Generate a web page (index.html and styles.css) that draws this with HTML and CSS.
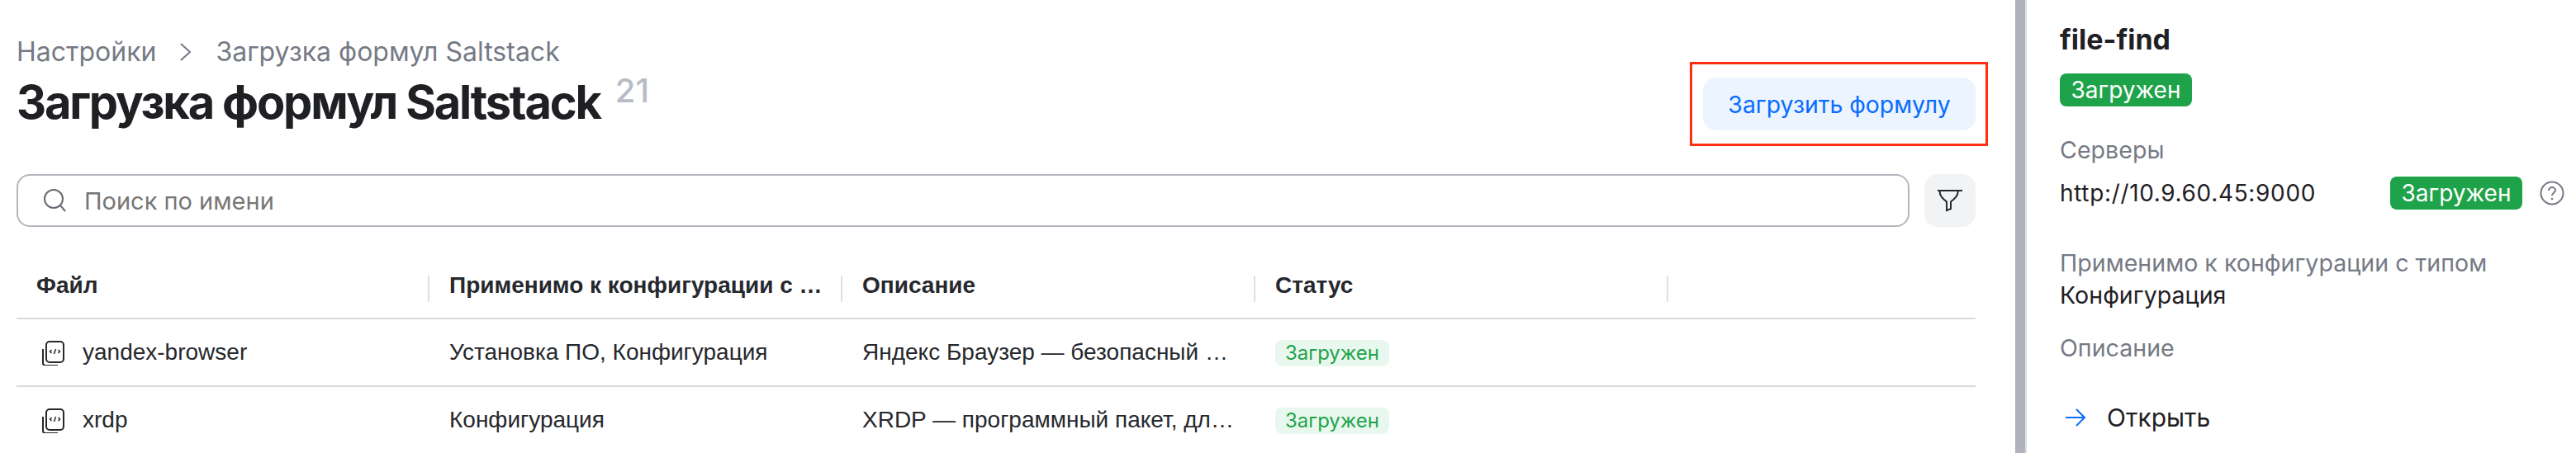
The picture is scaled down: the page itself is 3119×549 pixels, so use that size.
FILE: index.html
```html
<!DOCTYPE html>
<html lang="ru">
<head>
  <meta charset="UTF-8" />
  <title>Загрузка формул Saltstack</title>
  <link rel="stylesheet" href="styles.css">
</head>
<body>

  <main class="content">
    <div class="page-head">
      <div>
        <nav class="breadcrumbs">
          <span>Настройки</span>
          <svg class="crumb-sep" width="16" height="24" viewBox="0 0 16 24"><path d="M2 2l11 10L2 22" fill="none" stroke="#757a85" stroke-width="2"/></svg>
          <span>Загрузка формул Saltstack</span>
        </nav>
        <h1 class="page-title">Загрузка формул Saltstack<sup class="count">21</sup></h1>
      </div>
      <button class="upload-btn">Загрузить формулу</button>
    </div>

    <div class="toolbar">
      <div class="search">
        <svg width="30" height="30" viewBox="0 0 30 30"><circle cx="13" cy="13" r="11" fill="none" stroke="#666a72" stroke-width="2"/><path d="M21 21l6 7" fill="none" stroke="#666a72" stroke-width="2"/></svg>
        <span class="placeholder">Поиск по имени</span>
      </div>
      <button class="filter-btn">
        <svg width="32" height="32" viewBox="0 0 32 32"><path d="M1 4h30M3.500 4c0 7 4 10 8.500 13.500v10.500l5-2v-8.500c4.500-3.500 8.500-6.500 9-13.500" fill="none" stroke="#26282d" stroke-width="2"/></svg>
      </button>
    </div>

    <table class="formulas">
      <thead>
        <tr>
          <th>Файл</th>
          <th>Применимо к конфигурации с типом</th>
          <th>Описание</th>
          <th>Статус</th>
          <th class="spare"></th>
        </tr>
      </thead>
      <tbody>
        <tr>
          <td>
            <div class="file-cell">
              <svg width="32" height="32" viewBox="0 0 32 32"><rect x="6" y="3" width="21" height="25" rx="4" fill="none" stroke="#26282d" stroke-width="2"/><path d="M2 12v17c0 2 1 3 3 3h15" fill="none" stroke="#26282d" stroke-width="2"/><path d="M12.500 13l-2 2 2 2M20.500 13l2 2-2 2M17.500 12l-2 6" fill="none" stroke="#26282d" stroke-width="1.500"/></svg>
              yandex-browser
            </div>
          </td>
          <td>Установка ПО, Конфигурация</td>
          <td>Яндекс Браузер — безопасный браузер для работы</td>
          <td><span class="tag">Загружен</span></td>
          <td class="spare"></td>
        </tr>
        <tr>
          <td>
            <div class="file-cell">
              <svg width="32" height="32" viewBox="0 0 32 32"><rect x="6" y="3" width="21" height="25" rx="4" fill="none" stroke="#26282d" stroke-width="2"/><path d="M2 12v17c0 2 1 3 3 3h15" fill="none" stroke="#26282d" stroke-width="2"/><path d="M12.500 13l-2 2 2 2M20.500 13l2 2-2 2M17.500 12l-2 6" fill="none" stroke="#26282d" stroke-width="1.500"/></svg>
              xrdp
            </div>
          </td>
          <td>Конфигурация</td>
          <td>XRDP — программный пакет, для удаленного доступа</td>
          <td><span class="tag">Загружен</span></td>
          <td class="spare"></td>
        </tr>
      </tbody>
    </table>
  </main>

  <div class="divider"></div>

  <aside class="details">
    <h2 class="details-title">file-find</h2>
    <span class="badge">Загружен</span>

    <div class="label servers-label">Серверы</div>
    <div class="server-row">
      <span class="server-url">http://10.9.60.45:9000</span>
      <span class="badge">Загружен</span>
      <svg class="help" width="30" height="30" viewBox="0 0 30 30"><circle cx="15" cy="15" r="13.500" fill="none" stroke="#757a85" stroke-width="2"/><path d="M11 12c0-2.500 2-4 4-4s4 1.500 4 3.500c0 3-4 3.500-4 6.500" fill="none" stroke="#757a85" stroke-width="2"/><circle cx="15" cy="22" r="1.300" fill="#757a85"/></svg>
    </div>

    <div class="label type-label">Применимо к конфигурации с типом</div>
    <div class="value">Конфигурация</div>

    <div class="label descr-label">Описание</div>

    <a class="open-link">
      <svg width="24" height="22" viewBox="0 0 24 22"><path d="M0 11h23M13 1l10 10-10 10" fill="none" stroke="#0a6cff" stroke-width="2"/></svg>
      Открыть
    </a>
  </aside>

</body>
</html>
```

FILE: styles.css
```css
* {
  margin: 0;
  padding: 0;
  box-sizing: border-box;
}

html, body {
  height: 549px;
  overflow: hidden;
}

body {
  display: flex;
  background: #fff;
  color: #1f2024;
  font-family: Inter, 'Liberation Sans', sans-serif;
}

.content {
  width: 2440px;
  flex-shrink: 0;
  padding: 46px 48px 0 20px;
}

.page-head {
  display: flex;
  justify-content: space-between;
  align-items: flex-start;
  height: 165px;
}

.breadcrumbs {
  display: flex;
  align-items: center;
  gap: 28px;
  font-size: 32px;
  line-height: 34px;
  color: #757a85;
}

.page-title {
  font-size: 56px;
  line-height: 64px;
  font-weight: 700;
  letter-spacing: -2.200px;
  margin-top: 12px;
}

.count {
  font-size: 40px;
  font-weight: 500;
  color: #b8bcc5;
  letter-spacing: 0;
  margin-left: 18px;
  line-height: 0;
  vertical-align: 20px;
}

.upload-btn {
  position: relative;
  width: 330px;
  height: 64px;
  margin-top: 48px;
  border: none;
  border-radius: 16px;
  background: #ebf4ff;
  color: #0a6cff;
  font-family: inherit;
  font-size: 28.400px;
}

/* red annotation frame */
.upload-btn::after {
  content: "";
  position: absolute;
  top: -19px;
  bottom: -19px;
  left: -16px;
  right: -15px;
  border: 3px solid #ff2f0f;
}

.toolbar {
  display: flex;
  gap: 18px;
}

.search {
  flex-grow: 1;
  display: flex;
  align-items: center;
  gap: 20px;
  height: 64px;
  padding-left: 30px;
  border: 2px solid #b3b7bd;
  border-radius: 16px;
}

.placeholder {
  font-size: 29px;
  color: #777;
}

.filter-btn {
  width: 62px;
  height: 64px;
  border: none;
  border-radius: 16px;
  background: #f2f3f5;
  display: flex;
  align-items: center;
  justify-content: center;
}

.formulas {
  width: 100%;
  margin-top: 31px;
  border-collapse: collapse;
  table-layout: fixed;
  font-family: 'Liberation Sans', sans-serif;
  font-size: 28px;
  color: #26282d;
}

.formulas th,
.formulas td {
  width: 500px;
  padding: 0 24px;
  text-align: left;
  white-space: nowrap;
  overflow: hidden;
  text-overflow: ellipsis;
  border-bottom: 2px solid #d9d9d9;
}

.formulas th {
  height: 80px;
  font-weight: 700;
  background: linear-gradient(#dfe0e2, #dfe0e2) right 28px / 2px 32px no-repeat;
}

.formulas td {
  height: 82px;
}

.formulas .spare {
  width: auto;
}

.formulas th.spare {
  background: none;
}

.file-cell {
  display: flex;
  align-items: center;
  gap: 18px;
  padding-left: 6px;
}

.tag {
  display: inline-block;
  height: 32px;
  padding: 0 12px;
  border-radius: 8px;
  background: #e9f8ee;
  color: #1fa34a;
  font-family: Inter, sans-serif;
  font-size: 24px;
  line-height: 32px;
}

.divider {
  width: 14px;
  flex-shrink: 0;
  background: #b0b3bb;
  border-right: 2px solid #dcdee2;
}

.details {
  flex-grow: 1;
  padding: 28px 14px 0 40px;
}

.details-title {
  font-size: 34px;
  line-height: 40px;
  font-weight: 700;
}

.badge {
  display: inline-block;
  width: 160px;
  height: 40px;
  margin-top: 21px;
  border-radius: 8px;
  background: #1fa34a;
  color: #fff;
  font-size: 28px;
  line-height: 40px;
  text-align: center;
}

.label {
  font-size: 28.600px;
  line-height: 34px;
  color: #757a85;
}

.servers-label {
  margin-top: 36px;
}

.server-row {
  display: flex;
  align-items: center;
  height: 40px;
  margin-top: 15px;
  font-size: 28px;
}

.server-url {
  width: 400px;
  letter-spacing: 0.650px;
}

.server-row .badge {
  margin-top: 0;
}

.help {
  margin-left: 21px;
}

.type-label {
  margin-top: 48px;
}

.value {
  font-size: 28.600px;
  line-height: 34px;
  margin-top: 5px;
}

.descr-label {
  margin-top: 30px;
}

.open-link {
  display: flex;
  align-items: center;
  gap: 26px;
  margin-top: 49px;
  padding-left: 7px;
  font-size: 30px;
  line-height: 36px;
}
```
